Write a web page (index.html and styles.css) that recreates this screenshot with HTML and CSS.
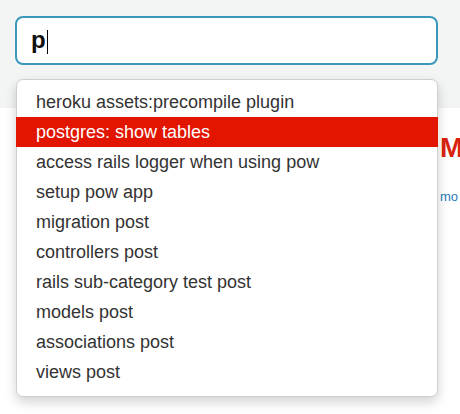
FILE: index.html
```html
<!DOCTYPE html>
<html>
<head>
<meta charset="utf-8">
<link rel="stylesheet" href="styles.css">
</head>
<body>
<div class="top">
  <div class="search">
    <span class="query">p</span><span class="caret"></span>
  </div>
  <ul class="menu">
    <li class="item">heroku assets:precompile plugin</li>
    <li class="item active">postgres: show tables</li>
    <li class="item">access rails logger when using pow</li>
    <li class="item">setup pow app</li>
    <li class="item">migration post</li>
    <li class="item">controllers post</li>
    <li class="item">rails sub-category test post</li>
    <li class="item">models post</li>
    <li class="item">associations post</li>
    <li class="item">views post</li>
  </ul>
</div>
<div class="content">
  <div class="main">
    <h1 class="title">M</h1>
    <a class="more">mo</a>
  </div>
</div>
</body>
</html>
```
FILE: styles.css
```css
html, body {
  margin: 0;
  padding: 0;
}
body {
  background: #f3f4f4;
  font-family: "Liberation Sans", Arial, sans-serif;
  width: 460px;
  height: 414px;
  overflow: hidden;
  position: relative;
}
.top {
  padding: 16px 22px 0 15px;
  height: 108px;
  box-sizing: border-box;
  position: relative;
}
.search {
  height: 49px;
  box-sizing: border-box;
  border: 2px solid #3b98bd;
  border-radius: 8px;
  background: #fff;
  display: flex;
  align-items: center;
  padding-left: 14px;
}
.query {
  font-size: 24px;
  font-weight: bold;
  color: #111;
  line-height: 1;
  margin-top: -2px;
}
.caret {
  display: inline-block;
  width: 1px;
  height: 24px;
  background: #000;
  margin-left: 1px;
  margin-top: 2px;
}
.menu {
  position: absolute;
  left: 16px;
  top: 79px;
  width: 422px;
  box-sizing: border-box;
  margin: 0;
  padding: 7px 0 9px;
  list-style: none;
  background: #fff;
  border: 1px solid #cfcfcf;
  border-radius: 7px;
  box-shadow: 0 5px 12px rgba(0, 0, 0, 0.18);
  z-index: 2;
}
.item {
  height: 30px;
  line-height: 30px;
  padding-left: 19px;
  font-size: 18px;
  color: #333;
}
.item.active {
  background: #e11500;
  color: #fff;
  margin: 0 -1px;
  padding-left: 20px;
}
.content {
  background: #fff;
  height: 306px;
  display: flex;
  justify-content: flex-end;
}
.main {
  width: 20px;
  padding-left: 1px;
  overflow: hidden;
  white-space: nowrap;
}
.title {
  margin: 24px 0 0;
  color: #d9230f;
  font-size: 28px;
  font-weight: bold;
  line-height: 32px;
}
.more {
  display: block;
  margin-top: 25px;
  color: #2a7ab8;
  font-size: 13px;
}
```
